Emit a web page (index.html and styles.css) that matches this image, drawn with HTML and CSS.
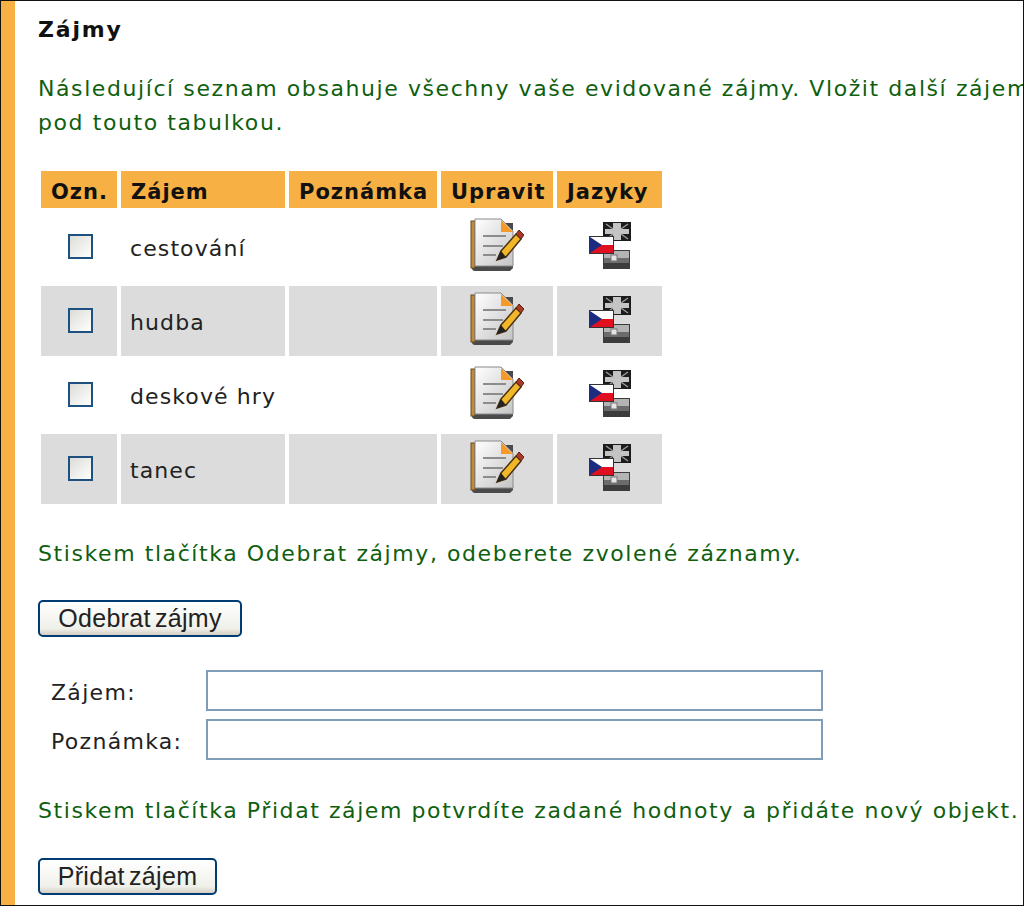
FILE: index.html

```html
<!DOCTYPE html>
<html lang="cs">
<head>
  <meta charset="UTF-8" />
  <title>Zájmy</title>
  <link rel="stylesheet" href="styles.css">
</head>
<body>
  <svg class="defs" width="0" height="0">
    <defs>
      <linearGradient id="paper" x1="0" y1="0" x2="1" y2="1">
        <stop offset="0" stop-color="#ffffff"/>
        <stop offset="1" stop-color="#c4c4c4"/>
      </linearGradient>
      <symbol id="edit-icon" viewBox="0 0 54 54">
        <path d="M3 5 H43 V50 L40 53 H5 Q2 53 2 50 Z" fill="#4a4a4a"/>
        <rect x="1" y="3" width="4" height="47" fill="#c08a3c" stroke="#6a4a20" stroke-width="1"/>
        <path d="M5 1 H31 L43 13 V48 H5 Z" fill="url(#paper)" stroke="#8a8a8a" stroke-width="1"/>
        <path d="M31 2 L43 14 H31 Z" fill="#f59a28"/>
        <path d="M13 18 H36 M13 28 H33 M13 37 H26" stroke="#8c8c8c" stroke-width="2"/>
        <path d="M31 33 L46 16 L51 21 L36 39 L27 42 Z" fill="#f0b828" stroke="#4a3010" stroke-width="1.5"/>
        <path d="M46 16 L49 12 L54 17 L51 21 Z" fill="#a83828" stroke="#5a2010" stroke-width="1"/>
        <path d="M27 42 L31 33 L36 39 Z" fill="#222"/>
      </symbol>
      <symbol id="lang-icon" viewBox="0 0 42 48">
        <rect x="14" y="0" width="28" height="19" fill="#1c1c1c"/>
        <path d="M16 7 H40 V12 H16 Z M24 1 H32 V18 H24 Z" fill="#c4c4c4"/>
        <path d="M17 2 L24 7 M39 2 L32 7 M17 17 L24 12 M39 17 L32 12" stroke="#999" stroke-width="1.5"/>
        <rect x="14" y="28" width="27" height="19" fill="#3c3c3c"/>
        <rect x="15" y="29" width="25" height="7" fill="#b4b4b4"/>
        <rect x="15" y="36" width="25" height="5" fill="#6c6c6c"/>
        <rect x="22" y="33" width="6" height="6" fill="#e4e4e4" stroke="#777" stroke-width="1"/>
        <rect x="0.5" y="14.5" width="24" height="17" fill="#fff" stroke="#333" stroke-width="1"/>
        <rect x="1" y="23" width="23" height="8" fill="#e01020"/>
        <path d="M1 15 L13 23 L1 31 Z" fill="#1c2c80"/>
      </symbol>
    </defs>
  </svg>

  <div class="page">
    <div class="side-bar"></div>
    <div class="content">
      <h2>Zájmy</h2>
      <p class="note intro">Následující seznam obsahuje všechny vaše evidované zájmy. Vložit další zájem můžete<br>pod touto tabulkou.</p>

      <table class="list">
        <thead>
          <tr>
            <th class="col-mark">Ozn.</th>
            <th class="col-name">Zájem</th>
            <th class="col-note">Poznámka</th>
            <th class="col-edit">Upravit</th>
            <th class="col-lang">Jazyky</th>
          </tr>
        </thead>
        <tbody>
          <tr>
            <td class="center"><input type="checkbox" class="check"></td>
            <td>cestování</td>
            <td></td>
            <td class="center"><svg class="icon-edit"><use href="#edit-icon"/></svg></td>
            <td class="center"><svg class="icon-lang"><use href="#lang-icon"/></svg></td>
          </tr>
          <tr class="alt">
            <td class="center"><input type="checkbox" class="check"></td>
            <td>hudba</td>
            <td></td>
            <td class="center"><svg class="icon-edit"><use href="#edit-icon"/></svg></td>
            <td class="center"><svg class="icon-lang"><use href="#lang-icon"/></svg></td>
          </tr>
          <tr>
            <td class="center"><input type="checkbox" class="check"></td>
            <td>deskové hry</td>
            <td></td>
            <td class="center"><svg class="icon-edit"><use href="#edit-icon"/></svg></td>
            <td class="center"><svg class="icon-lang"><use href="#lang-icon"/></svg></td>
          </tr>
          <tr class="alt">
            <td class="center"><input type="checkbox" class="check"></td>
            <td>tanec</td>
            <td></td>
            <td class="center"><svg class="icon-edit"><use href="#edit-icon"/></svg></td>
            <td class="center"><svg class="icon-lang"><use href="#lang-icon"/></svg></td>
          </tr>
        </tbody>
      </table>

      <p class="note after-table">Stiskem tlačítka Odebrat zájmy, odeberete zvolené záznamy.</p>
      <button class="btn btn-remove">Odebrat zájmy</button>

      <div class="form">
        <label for="zajem">Zájem:</label>
        <input type="text" id="zajem">
        <label for="poznamka">Poznámka:</label>
        <input type="text" id="poznamka">
      </div>

      <p class="note after-form">Stiskem tlačítka Přidat zájem potvrdíte zadané hodnoty a přidáte nový objekt.</p>
      <button class="btn btn-add">Přidat zájem</button>
    </div>
  </div>
</body>
</html>
```

FILE: styles.css

```css
html, body {
  margin: 0;
  padding: 0;
  background: #fff;
}

body {
  font-family: "DejaVu Sans", Verdana, sans-serif;
  overflow: hidden;
}

.defs {
  display: block;
  height: 0;
}

.page {
  display: flex;
  box-sizing: border-box;
  width: 1024px;
  height: 906px;
  border: 1px solid #111;
  overflow: hidden;
}

.side-bar {
  flex: 0 0 14px;
  background: #f7b043;
}

.content {
  flex: 1;
  min-width: 0;
  padding-left: 22px;
  white-space: nowrap;
  overflow: hidden;
}

h2 {
  margin: 14px 0 0 1px;
  font-size: 22px;
  line-height: 30px;
  letter-spacing: 1.8px;
  color: #111;
}

.note {
  margin: 0 0 0 1px;
  font-size: 22px;
  line-height: 34px;
  letter-spacing: 1.58px;
  color: #0f5f0f;
}

.intro {
  margin-top: 27px;
}

.list {
  table-layout: fixed;
  width: 629px;
  margin-top: 27px;
  border-collapse: separate;
  border-spacing: 4px;
  font-size: 22px;
  letter-spacing: 1.1px;
  color: #222;
}

.list th {
  height: 37px;
  padding: 5px 0 0 10px;
  box-sizing: border-box;
  background: #f7b043;
  font-size: 21px;
  color: #111;
  text-align: left;
  letter-spacing: 1px;
}

.list td {
  height: 70px;
  padding: 3px 0 0 9px;
  box-sizing: border-box;
}

.list .alt td {
  background: #dcdcdc;
}

.col-mark { width: 76px; }
.col-name { width: 164px; }
.col-note { width: 148px; }
.col-edit { width: 112px; }
.col-lang { width: 105px; }

.list .center {
  padding: 0;
  text-align: center;
}

.check {
  appearance: none;
  display: block;
  box-sizing: border-box;
  width: 25px;
  height: 25px;
  margin: -1px 0 0 27px;
  border: 2px solid #1c5180;
  background: linear-gradient(135deg, #dcdcd7, #fff);
}

.icon-edit {
  display: block;
  width: 54px;
  height: 54px;
  margin: -5px auto 0;
}

.icon-lang {
  display: block;
  width: 42px;
  height: 48px;
  margin: -2px auto 0;
}

.after-table {
  margin-top: 29px;
}

.btn {
  display: block;
  box-sizing: border-box;
  height: 37px;
  padding: 0;
  border: 2px solid #003c74;
  border-radius: 5px;
  background: linear-gradient(#ffffff, #f0f0ea 80%, #d6d0c5);
  font-family: "Liberation Sans", Arial, sans-serif;
  font-size: 25px;
  letter-spacing: 0.3px;
  word-spacing: -3px;
  color: #222;
}

.btn-remove {
  width: 204px;
  margin: 29px 0 0 1px;
}

.btn-add {
  width: 179px;
  margin: 30px 0 0 1px;
}

.form {
  display: grid;
  grid-template-columns: 155px 617px;
  row-gap: 8px;
  align-items: center;
  margin: 33px 0 0 14px;
  font-size: 22px;
  letter-spacing: 1.3px;
  color: #222;
}

.form label {
  padding-top: 4px;
}

.form input {
  box-sizing: border-box;
  width: 617px;
  height: 41px;
  border: 2px solid #7f9db9;
  background: #fff;
}

.after-form {
  margin-top: 34px;
}
```
